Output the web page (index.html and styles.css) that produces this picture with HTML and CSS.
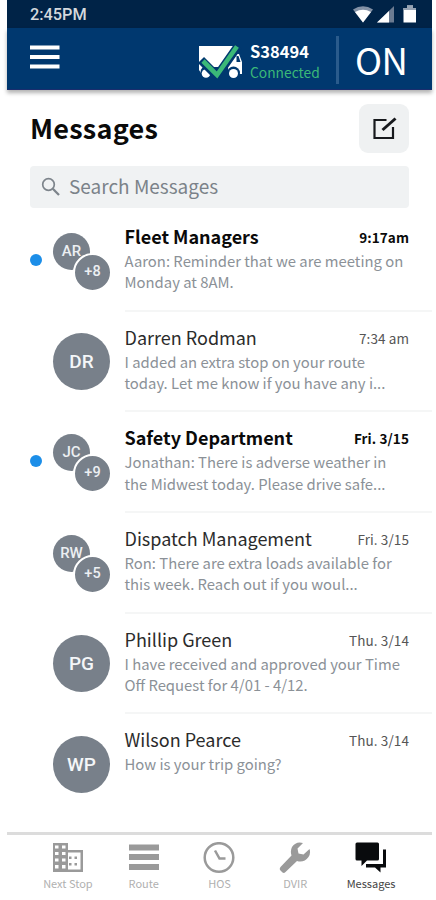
FILE: index.html
```html
<!DOCTYPE html>
<html lang="en">
<head>
<meta charset="utf-8">
<title>Messages</title>
<link rel="stylesheet" href="styles.css">
</head>
<body>
<div class="phone">
  <div class="status">
    <span class="clock">2:45PM</span>
    <svg class="status-icons" width="66" height="20" viewBox="0 0 66 20">
      <path d="M0 4.500Q10 -2 20 4.500L10 17.500Z" fill="#8391a5"/>
      <path d="M2 7Q10 2.500 18 7L10 17.500Z" fill="#fff"/>
      <path d="M41 1V17.500H24Z" fill="#6c7b91"/>
      <path d="M36 6V17.500H24Z" fill="#fff"/>
      <path d="M50.500 3H54V0.500H60V3H63V17.500H50.500Z" fill="#fff"/>
      <path d="M50.500 3H54V0.500H60V3H63V5H50.500Z" fill="#97a3b3"/>
    </svg>
  </div>
  <header class="header">
    <svg class="menu" width="30" height="26" viewBox="0 0 30 26"><path d="M0 2.500H29.500M0 12H29.500M0 21.500H29.500" stroke="#fff" stroke-width="4.200"/></svg>
    <svg class="truck" width="46" height="36" viewBox="0 0 46 36">
      <path d="M1 3H37V11H41L44 19V31H30V24H1Z" fill="#fff"/>
      <path d="M1 23H7V30H3L1 27Z" fill="#fff"/>
      <path d="M38.500 13H40.500L42.500 19H38.500Z" fill="#00386f"/>
      <circle cx="8.500" cy="29" r="6" fill="#00386f"/><circle cx="8" cy="30.500" r="4.300" fill="#fff"/>
      <circle cx="35.500" cy="30" r="6.500" fill="#00386f"/><circle cx="35.500" cy="30.500" r="4.500" fill="#fff"/>
      <path d="M3 17L19 33L40 3" fill="none" stroke="#00386f" stroke-width="8.500"/>
      <path d="M5 18L19 32L39 3.500" fill="none" stroke="#3bb878" stroke-width="4.600"/>
    </svg>
    <div class="unit"><div class="unit-id">S38494</div><div class="unit-state">Connected</div></div>
    <div class="rule"></div>
    <div class="duty">ON</div>
  </header>
  <div class="top">
    <h1 class="title">Messages</h1>
    <div class="compose"><svg width="26" height="26" viewBox="0 0 26 26" fill="none" stroke="#17191d" stroke-width="2.200"><path d="M15.500 4H3.500V22H22V11"/><path d="M11.500 14L24.500 2.500" stroke-width="3"/></svg></div>
  </div>
  <div class="search">
    <svg width="20" height="20" viewBox="0 0 20 20" fill="none" stroke="#7d848b"><circle cx="7.500" cy="7.500" r="5.800" stroke-width="1.700"/><path d="M11.800 11.800L18 18" stroke-width="2.300"/></svg>
    <span class="search-text">Search Messages</span>
  </div>
  <main class="list">
    <div class="row unread">
      <div class="dot"></div>
      <div class="group"><span class="a">AR</span><span class="b">+8</span></div>
      <div class="body"><div class="line"><span class="name">Fleet Managers</span><span class="time">9:17am</span></div><div class="text">Aaron: Reminder that we are meeting on<br>Monday at 8AM.</div></div>
    </div>
    <div class="row">
      <div class="dot"></div>
      <div class="avatar">DR</div>
      <div class="body"><div class="line"><span class="name">Darren Rodman</span><span class="time">7:34 am</span></div><div class="text">I added an extra stop on your route<br>today. Let me know if you have any i...</div></div>
    </div>
    <div class="row unread">
      <div class="dot"></div>
      <div class="group"><span class="a">JC</span><span class="b">+9</span></div>
      <div class="body"><div class="line"><span class="name">Safety Department</span><span class="time">Fri. 3/15</span></div><div class="text">Jonathan: There is adverse weather in<br>the Midwest today. Please drive safe...</div></div>
    </div>
    <div class="row">
      <div class="dot"></div>
      <div class="group"><span class="a">RW</span><span class="b">+5</span></div>
      <div class="body"><div class="line"><span class="name">Dispatch Management</span><span class="time">Fri. 3/15</span></div><div class="text">Ron: There are extra loads available for<br>this week. Reach out if you woul...</div></div>
    </div>
    <div class="row">
      <div class="dot"></div>
      <div class="avatar">PG</div>
      <div class="body"><div class="line"><span class="name">Phillip Green</span><span class="time">Thu. 3/14</span></div><div class="text">I have received and approved your Time<br>Off Request for 4/01 - 4/12.</div></div>
    </div>
    <div class="row">
      <div class="dot"></div>
      <div class="avatar">WP</div>
      <div class="body"><div class="line"><span class="name">Wilson Pearce</span><span class="time">Thu. 3/14</span></div><div class="text">How is your trip going?</div></div>
    </div>
  </main>
  <nav class="tabs">
    <div class="tab"><svg width="32" height="32" viewBox="0 0 32 32"><path d="M1 1H16V8H31V30H1Z" fill="#9a9a9a"/><path d="M3 3.500H6.500V6.500H3ZM10 3.500H13.500V6.500H10ZM3 10H6.500V13H3ZM10 10H13.500V13H10ZM3 16.500H6.500V19.500H3ZM10 16.500H13.500V19.500H10ZM3 23H6.500V26.500H3ZM10 23H13.500V26.500H10ZM16 10.500H28.500V27.500H16Z" fill="#fff"/><path d="M17 14.500H19.500V17H17ZM22.500 14.500H25V17H22.500ZM17 21H19.500V23.500H17ZM22.500 21H25V23.500H22.500Z" fill="#9a9a9a"/></svg><span>Next Stop</span></div>
    <div class="tab"><svg width="32" height="32" viewBox="0 0 32 32"><path d="M1 5.500H31M1 15H31M1 25H31" stroke="#9a9a9a" stroke-width="6"/></svg><span>Route</span></div>
    <div class="tab"><svg width="32" height="32" viewBox="0 0 32 32" fill="none" stroke="#9a9a9a" stroke-width="2.500"><circle cx="16" cy="15.500" r="14.300"/><path d="M12 8.500L16.500 16.500H22.500"/></svg><span>HOS</span></div>
    <div class="tab"><svg width="32" height="32" viewBox="0 0 32 32"><path d="M24 1Q17 -1 13 5Q11 9 12.500 13.500L1.500 25Q0 27 1.500 28.500L3.500 30.500Q5 31.500 6.500 30L18 19Q25 21 29.500 15Q32 11 30.500 7L24.500 12.500L19.500 11.500L18.500 6.500Z" fill="#9a9a9a"/></svg><span>DVIR</span></div>
    <div class="tab active"><svg width="32" height="32" viewBox="0 0 32 32"><path d="M28 7.500H31V25.500H25.500V30.500L20 25.500H11V22H28Z" fill="#090b0d"/><path d="M2 0.500H22.500Q24 0.500 24 2V17Q24 18.500 22.500 18.500H12L6.500 24V18.500H2Q0.500 18.500 0.500 17V2Q0.500 0.500 2 0.500Z" fill="#090b0d"/></svg><span>Messages</span></div>
  </nav>
</div>
</body>
</html>
```
FILE: styles.css
```css
* { box-sizing: border-box; }
body { margin: 0; background: #fff; font-family: "Noto Sans CJK JP", "Noto Sans", sans-serif; color: #101010; }
svg { display: block; flex: none; }
span { white-space: nowrap; }
.phone { width: 425px; height: 900px; margin-left: 7px; display: flex; flex-direction: column; }
.status { height: 28px; flex: none; background: #002347; display: flex; justify-content: space-between; align-items: center; padding: 0 13px 0 23px; }
.clock { font: 500 16.300px/28px Roboto, sans-serif; color: #d5d9dd; padding-top: 2px; }
.status-icons { margin-top: 2px; }
.header { height: 62px; flex: none; background: #00386f; display: flex; padding-left: 23px; border-bottom: 1px solid #1a2d6e; box-shadow: 0 3px 4px rgba(0,0,0,.3); }
.menu { margin-top: 17px; }
.truck { margin: 15px 0 0 138px; }
.unit { width: 86px; margin: 12px 0 0 6px; }
.unit-id { font-size: 16.500px; line-height: 22px; font-weight: 700; color: #fff; }
.unit-state { font-size: 13.800px; line-height: 20px; color: #3bb878; }
.rule { width: 3px; height: 48px; margin-top: 8px; background: #2a5b8c; }
.duty { margin-left: 16px; font-size: 36.500px; line-height: 64px; letter-spacing: -.5px; color: #fff; }
.top { display: flex; justify-content: space-between; height: 76px; flex: none; padding: 14px 23px 0; }
.title { margin: 0; font-size: 27px; line-height: 48px; letter-spacing: .25px; font-weight: 700; color: #0a0a0a; }
.compose { width: 50px; height: 49px; border-radius: 9px; background: #eff1f2; display: flex; justify-content: center; align-items: center; }
.search { height: 42px; flex: none; margin: 0 23px; border-radius: 4px; background: #f0f2f3; display: flex; align-items: center; padding-left: 11px; }
.search-text { margin-left: 8px; font-size: 19px; line-height: 40px; padding-bottom: 2px; color: #7b8289; }
.list { height: 624px; flex: none; padding-top: 2px; }
.row { height: 100.700px; display: flex; }
.dot { width: 12px; height: 12px; border-radius: 50%; margin: 44px 11px 0 23px; flex: none; }
.unread .dot { background: #1c8ee8; }
.avatar, .group { width: 57px; height: 57px; margin: 22.500px 14.500px 0 0; flex: none; }
.avatar { border-radius: 50%; background: #78808a; color: #f4f6f8; font: 500 19px/57px Roboto, sans-serif; text-align: center; }
.group { position: relative; }
.group span { position: absolute; border-radius: 50%; background: #78808a; color: #eceff2; font-family: Roboto, sans-serif; font-weight: 500; text-align: center; }
.group .a { left: 0; top: 0; width: 37px; height: 37px; line-height: 36px; font-size: 15px; }
.group .b { right: -2px; bottom: -2px; width: 39px; height: 39px; border: 2px solid #fff; line-height: 34px; font-size: 14.500px; }
.body { flex: 1; height: 101.500px; border-bottom: 2px solid #f5f6f6; padding-top: 13px; }
.row:last-child .body { border: 0; }
.line { display: flex; justify-content: space-between; padding-right: 23px; line-height: 26px; height: 27px; }
.name { font-size: 18px; color: #2b2b2b; }
.time { font-size: 13.500px; color: #555; padding-top: 1px; letter-spacing: .1px; }
.unread .name, .unread .time { font-weight: 700; color: #0a0a0a; }
.text { font-size: 14.850px; line-height: 21.300px; color: #8b9197; }
.tabs { height: 68px; border-top: 3px solid #dcdcdc; display: flex; justify-content: center; padding: 7px 23px 0; }
.tab { width: 75.800px; display: flex; flex-direction: column; align-items: center; font-size: 11px; line-height: 18px; color: #b0b0b0; }
.tab.active { color: #444; }
```
